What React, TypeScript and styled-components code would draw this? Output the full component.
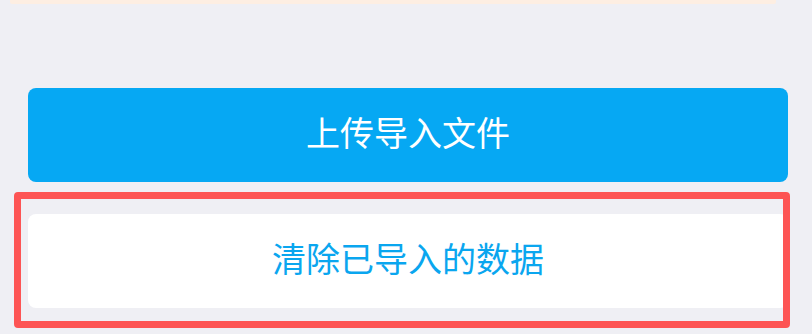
import React from "react";
import styled, { createGlobalStyle } from "styled-components";

const Global = createGlobalStyle`
  html, body {
    margin: 0;
    padding: 0;
    background: #efeff4;
    font-family: "Noto Sans CJK SC", "Noto Sans", sans-serif;
  }
`;

const Page = styled.div`
  position: relative;
  width: 812px;
  height: 334px;
  overflow: hidden;
  background: #efeff4;
  display: flex;
  flex-direction: column;
`;

const TopStrip = styled.div`
  margin-left: 10px;
  width: 766px;
  height: 4px;
  background: #fdeee2;
  border-radius: 0 0 2px 2px;
`;

const Actions = styled.div`
  display: flex;
  flex-direction: column;
  gap: 32px;
  margin-top: 84px;
  padding-left: 28px;
`;

const ActionButton = styled.button<{ $primary?: boolean }>`
  width: 760px;
  height: 94px;
  border: none;
  border-radius: 8px;
  background: ${(p) => (p.$primary ? "#06a8f3" : "#ffffff")};
  color: ${(p) => (p.$primary ? "#ffffff" : "#0aa6ef")};
  font-family: "Noto Sans CJK SC", "Noto Sans", sans-serif;
  font-size: 34px;
  line-height: 1;
  display: flex;
  align-items: center;
  justify-content: center;
  padding: 0 0 6px 0;
  box-sizing: border-box;
  cursor: pointer;
`;

const Highlight = styled.div`
  position: absolute;
  left: 14px;
  top: 192px;
  width: 776px;
  height: 136px;
  box-sizing: border-box;
  border: 7px solid #fd5454;
  border-radius: 4px;
  pointer-events: none;
`;

export default function App() {
  return (
    <Page>
      <Global />
      <TopStrip />
      <Actions>
        <ActionButton $primary>上传导入文件</ActionButton>
        <ActionButton>清除已导入的数据</ActionButton>
      </Actions>
      <Highlight />
    </Page>
  );
}
